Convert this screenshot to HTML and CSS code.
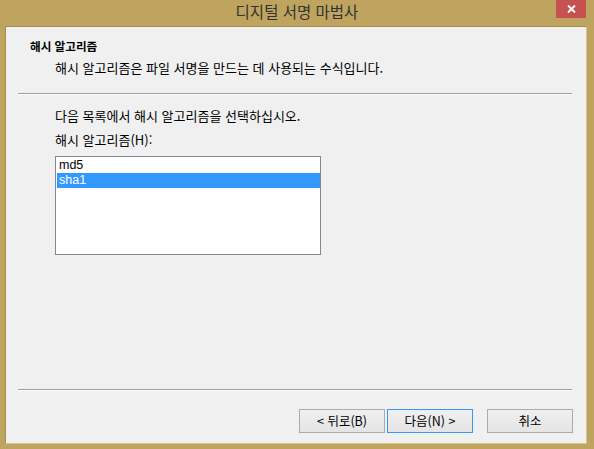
FILE: index.html
```html
<!DOCTYPE html>
<html lang="ko">
<head>
<meta charset="utf-8">
<title>디지털 서명 마법사</title>
<link rel="stylesheet" href="styles.css">
</head>
<body>
<div class="window">
  <div class="titlebar">
    <div class="title">디지털 서명 마법사</div>
    <div class="close">
      <svg width="9" height="8" viewBox="0 0 9 8"><path d="M1 0.5 L8 7.5 M8 0.5 L1 7.5" stroke="#fff" stroke-width="1.9" fill="none"/></svg>
    </div>
  </div>
  <div class="client">
    <div class="header">
      <div class="header-title">해시 알고리즘</div>
      <div class="header-desc">해시 알고리즘은 파일 서명을 만드는 데 사용되는 수식입니다.</div>
    </div>
    <div class="sep"></div>
    <div class="body">
      <div class="instr">다음 목록에서 해시 알고리즘을 선택하십시오.</div>
      <div class="label">해시 알고리즘(H):</div>
      <div class="listbox">
        <div class="item">md5</div>
        <div class="item selected">sha1</div>
      </div>
    </div>
    <div class="sep sep-bottom"></div>
    <div class="buttons">
      <div class="btn">&lt; 뒤로(B)</div>
      <div class="btn default">다음(N) &gt;</div>
      <div class="btn cancel">취소</div>
    </div>
  </div>
</div>
</body>
</html>
```

FILE: styles.css
```css
* { box-sizing: border-box; }
html, body {
  margin: 0;
  padding: 0;
}
body {
  font-family: "Noto Sans CJK KR", "Noto Sans", sans-serif;
  font-size: 13px;
  color: #000;
  background: #bea45e;
}
.window {
  width: 594px;
  height: 449px;
  background: #bea45e;
  display: flex;
  flex-direction: column;
  overflow: hidden;
}
.titlebar {
  height: 26px;
  flex: none;
  position: relative;
}
.title {
  font-size: 15.5px;
  line-height: 22px;
  text-align: center;
  color: #333;
}
.close {
  position: absolute;
  top: 0;
  right: 8px;
  width: 30px;
  height: 18px;
  background: #c75050;
  display: flex;
  align-items: center;
  justify-content: center;
}
.close svg { display: block; margin-top: -1px; }
.client {
  flex: 1;
  margin: 0 7px 5px 5px;
  background: #f0f0f0;
  border-top: 1px solid #a58c4d;
  border-left: 1px solid #a58c4d;
  border-right: 1px solid #d6c68c;
  border-bottom: 1px solid #d6c68c;
  display: flex;
  flex-direction: column;
}
.header {
  height: 66px;
  flex: none;
  padding: 12px 0 0 24px;
}
.header-title {
  font-size: 11.6px;
  line-height: 14px;
  font-weight: bold;
}
.header-desc {
  margin: 7px 0 0 25px;
  line-height: 16px;
}
.sep {
  height: 2px;
  margin: 0 14px 0 12px;
  border-top: 1px solid #a0a0a0;
  border-bottom: 1px solid #ffffff;
  flex: none;
}
.sep-bottom { margin-top: auto; }
.body {
  padding: 13px 0 0 49px;
  flex: none;
}
.instr { line-height: 16px; }
.label { line-height: 16px; margin-top: 8px; }
.listbox {
  margin-top: 8px;
  width: 266px;
  height: 99px;
  background: #fff;
  border: 1px solid #828790;
  padding-top: 1px;
}
.item {
  height: 15px;
  line-height: 15px;
  padding-left: 2px;
  margin-left: 1px;
  font-family: "Liberation Sans", Arial, sans-serif;
  font-size: 12.5px;
}
.item.selected {
  background: #3399ff;
  color: #fff;
}
.buttons {
  flex: none;
  display: flex;
  justify-content: flex-end;
  padding: 18px 13px 10px 0;
}
.btn {
  width: 86px;
  height: 24px;
  border: 1px solid #acacac;
  background: linear-gradient(#f0f0f0, #e5e5e5);
  display: flex;
  align-items: center;
  justify-content: center;
  line-height: 16px;
  font-size: 12.5px;
  margin-left: 2px;
}
.btn.default { border-color: #3399ff; }
.btn.cancel { margin-left: 14px; }
```
